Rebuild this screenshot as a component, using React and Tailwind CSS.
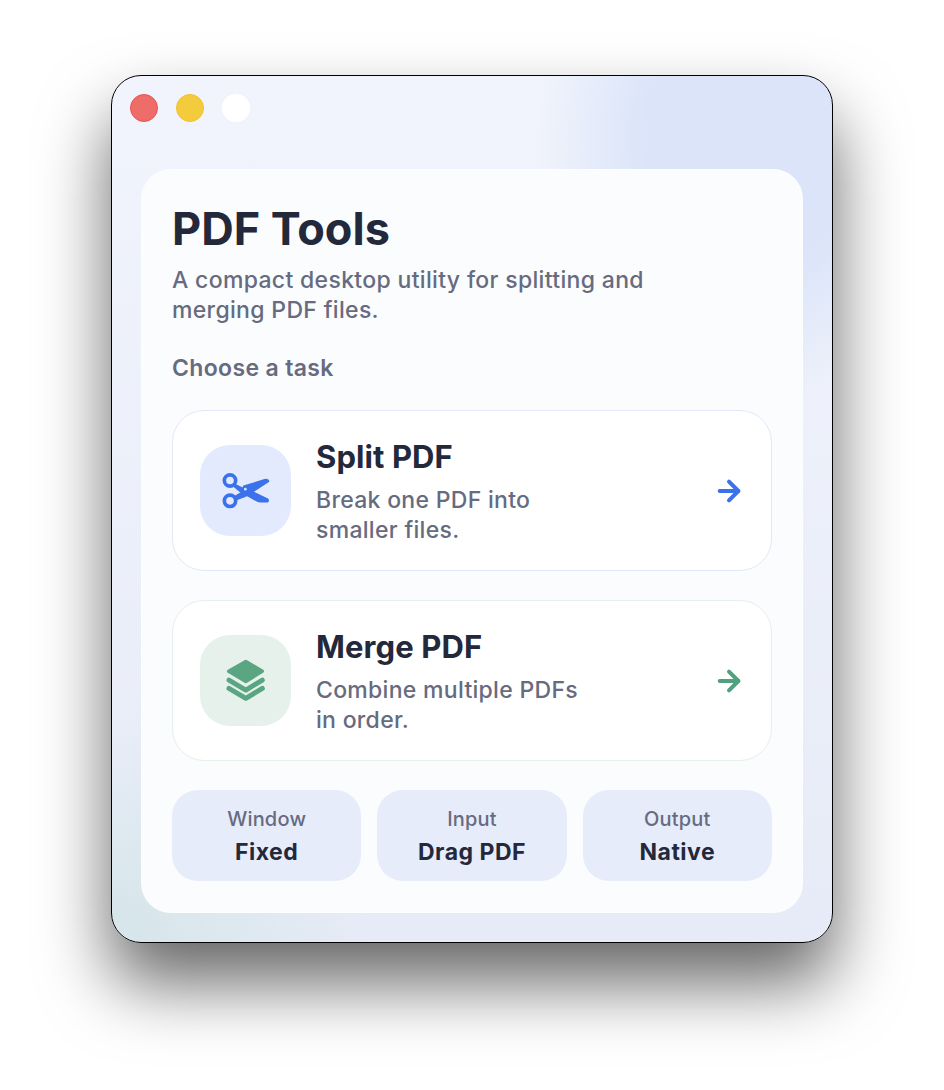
import React from 'react';
import { ArrowRight } from 'lucide-react';

const ScissorsIcon = () => (
  <svg width="48" height="37" viewBox="96 112 144 110" fill="none">
    <path d="M132 184 L152 172 L160 152 L226 132 Q238 132 238 141 L168 186 L136 198 Z" fill="#3b71ea" />
    <path d="M134 146 L158 158 L186 168 L234 191 Q240 197 234 203 L212 203 Q206 203 200 200 L150 172 L130 156 Z" fill="#3b71ea" />
    <circle cx="120" cy="137" r="17" stroke="#3b71ea" strokeWidth="11" />
    <circle cx="120" cy="198" r="17" stroke="#3b71ea" strokeWidth="11" />
    <circle cx="166" cy="163" r="4" fill="#e3eafd" />
  </svg>
);

const LayersIcon = () => (
  <svg width="39" height="43" viewBox="110 108 118 130" fill="none">
    <path d="M170 115 L220 145 L170 176 L118 145 Z" fill="#5aa582" stroke="#5aa582" strokeWidth="10" strokeLinejoin="round" />
    <path d="M119 172 L170 202 L220 172" stroke="#5aa582" strokeWidth="15" strokeLinecap="round" strokeLinejoin="round" />
    <path d="M119 197 L170 227 L220 197" stroke="#5aa582" strokeWidth="15" strokeLinecap="round" strokeLinejoin="round" />
  </svg>
);

const tasks = [
  {
    title: 'Split PDF',
    lines: ['Break one PDF into', 'smaller files.'],
    icon: <ScissorsIcon />,
    tile: 'bg-[#e3eafd]',
    border: 'border-[#e2e8fa]',
    arrow: 'text-[#3b71ea]',
  },
  {
    title: 'Merge PDF',
    lines: ['Combine multiple PDFs', 'in order.'],
    icon: <LayersIcon />,
    tile: 'bg-[#e6f1ec]',
    border: 'border-[#e5f0ec]',
    arrow: 'text-[#4fa27d]',
  },
];

const stats = [
  { label: 'Window', value: 'Fixed' },
  { label: 'Input', value: 'Drag PDF' },
  { label: 'Output', value: 'Native' },
];

export default function App() {
  return (
    <div className="w-[944px] h-[1090px] bg-white pt-[75px] pl-[111px] overflow-hidden font-['Inter',sans-serif]">
      {/* Window */}
      <div className="w-[722px] h-[868px] rounded-[30px] border border-black overflow-hidden shadow-[0_40px_70px_rgba(0,0,0,0.6)] bg-[radial-gradient(ellipse_215px_270px_at_640px_60px,#dbe4f9_50%,rgba(219,228,249,0)_100%),radial-gradient(ellipse_260px_230px_at_0px_100%,#d7e6ea_10%,rgba(215,230,234,0)_100%),linear-gradient(to_bottom,#f1f4fc,#e7ebf7)]">
        <div className="flex gap-[18px] pt-[18px] pl-[18px]">
          <div className="w-[28px] h-[28px] rounded-full bg-[#ef6d68] border border-[#e9534d]" />
          <div className="w-[28px] h-[28px] rounded-full bg-[#f4cb3c] border border-[#f1c12a]" />
          <div className="w-[28px] h-[28px] rounded-full bg-white" />
        </div>

        {/* Main card */}
        <div className="mt-[47px] ml-[29px] w-[662px] h-[744px] rounded-[30px] bg-[#fbfcfd] border border-white/50 pl-[30px] pr-[30px] pt-[31px]">
          <h1 className="text-[45px] leading-[56px] font-bold text-[#23283a]">PDF Tools</h1>
          <p className="mt-[8px] text-[23px] leading-[30px] font-[550] tracking-[0.33px] text-[#666b80]">
            A compact desktop utility for splitting and<br />merging PDF files.
          </p>
          <p className="mt-[28px] text-[23px] leading-[30px] font-semibold tracking-[0.35px] text-[#666b80]">Choose a task</p>

          <div className="mt-[27px] flex flex-col gap-[29px]">
            {tasks.map((t) => (
              <div key={t.title} className={`h-[161px] rounded-[32px] bg-white border ${t.border} pl-[27px] pr-[26px] flex items-center`}>
                <div className={`w-[91px] h-[91px] rounded-[30px] ${t.tile} flex items-center justify-center`}>
                  {t.icon}
                </div>
                <div className="ml-[25px] pt-[2px] flex-1">
                  <div className="text-[31px] leading-[38px] font-bold tracking-[0.1px] text-[#23283a]">{t.title}</div>
                  <div className="mt-[9px] text-[23px] leading-[30px] font-[550] tracking-[0.3px] text-[#666b80]">
                    {t.lines[0]}<br />{t.lines[1]}
                  </div>
                </div>
                <ArrowRight className={`w-[32px] h-[32px] ${t.arrow}`} strokeWidth={3} />
              </div>
            ))}
          </div>

          <div className="mt-[29px] flex gap-[16px]">
            {stats.map((s) => (
              <div key={s.label} className="flex-1 h-[91px] rounded-[26px] bg-[#e7ecfa] flex flex-col items-center justify-center">
                <div className="text-[20px] leading-[26px] font-[550] tracking-[0.2px] text-[#666b80]">{s.label}</div>
                <div className="mt-[6px] text-[23px] leading-[28px] font-bold tracking-[0.5px] text-[#23283a]">{s.value}</div>
              </div>
            ))}
          </div>
        </div>
      </div>
    </div>
  );
}
